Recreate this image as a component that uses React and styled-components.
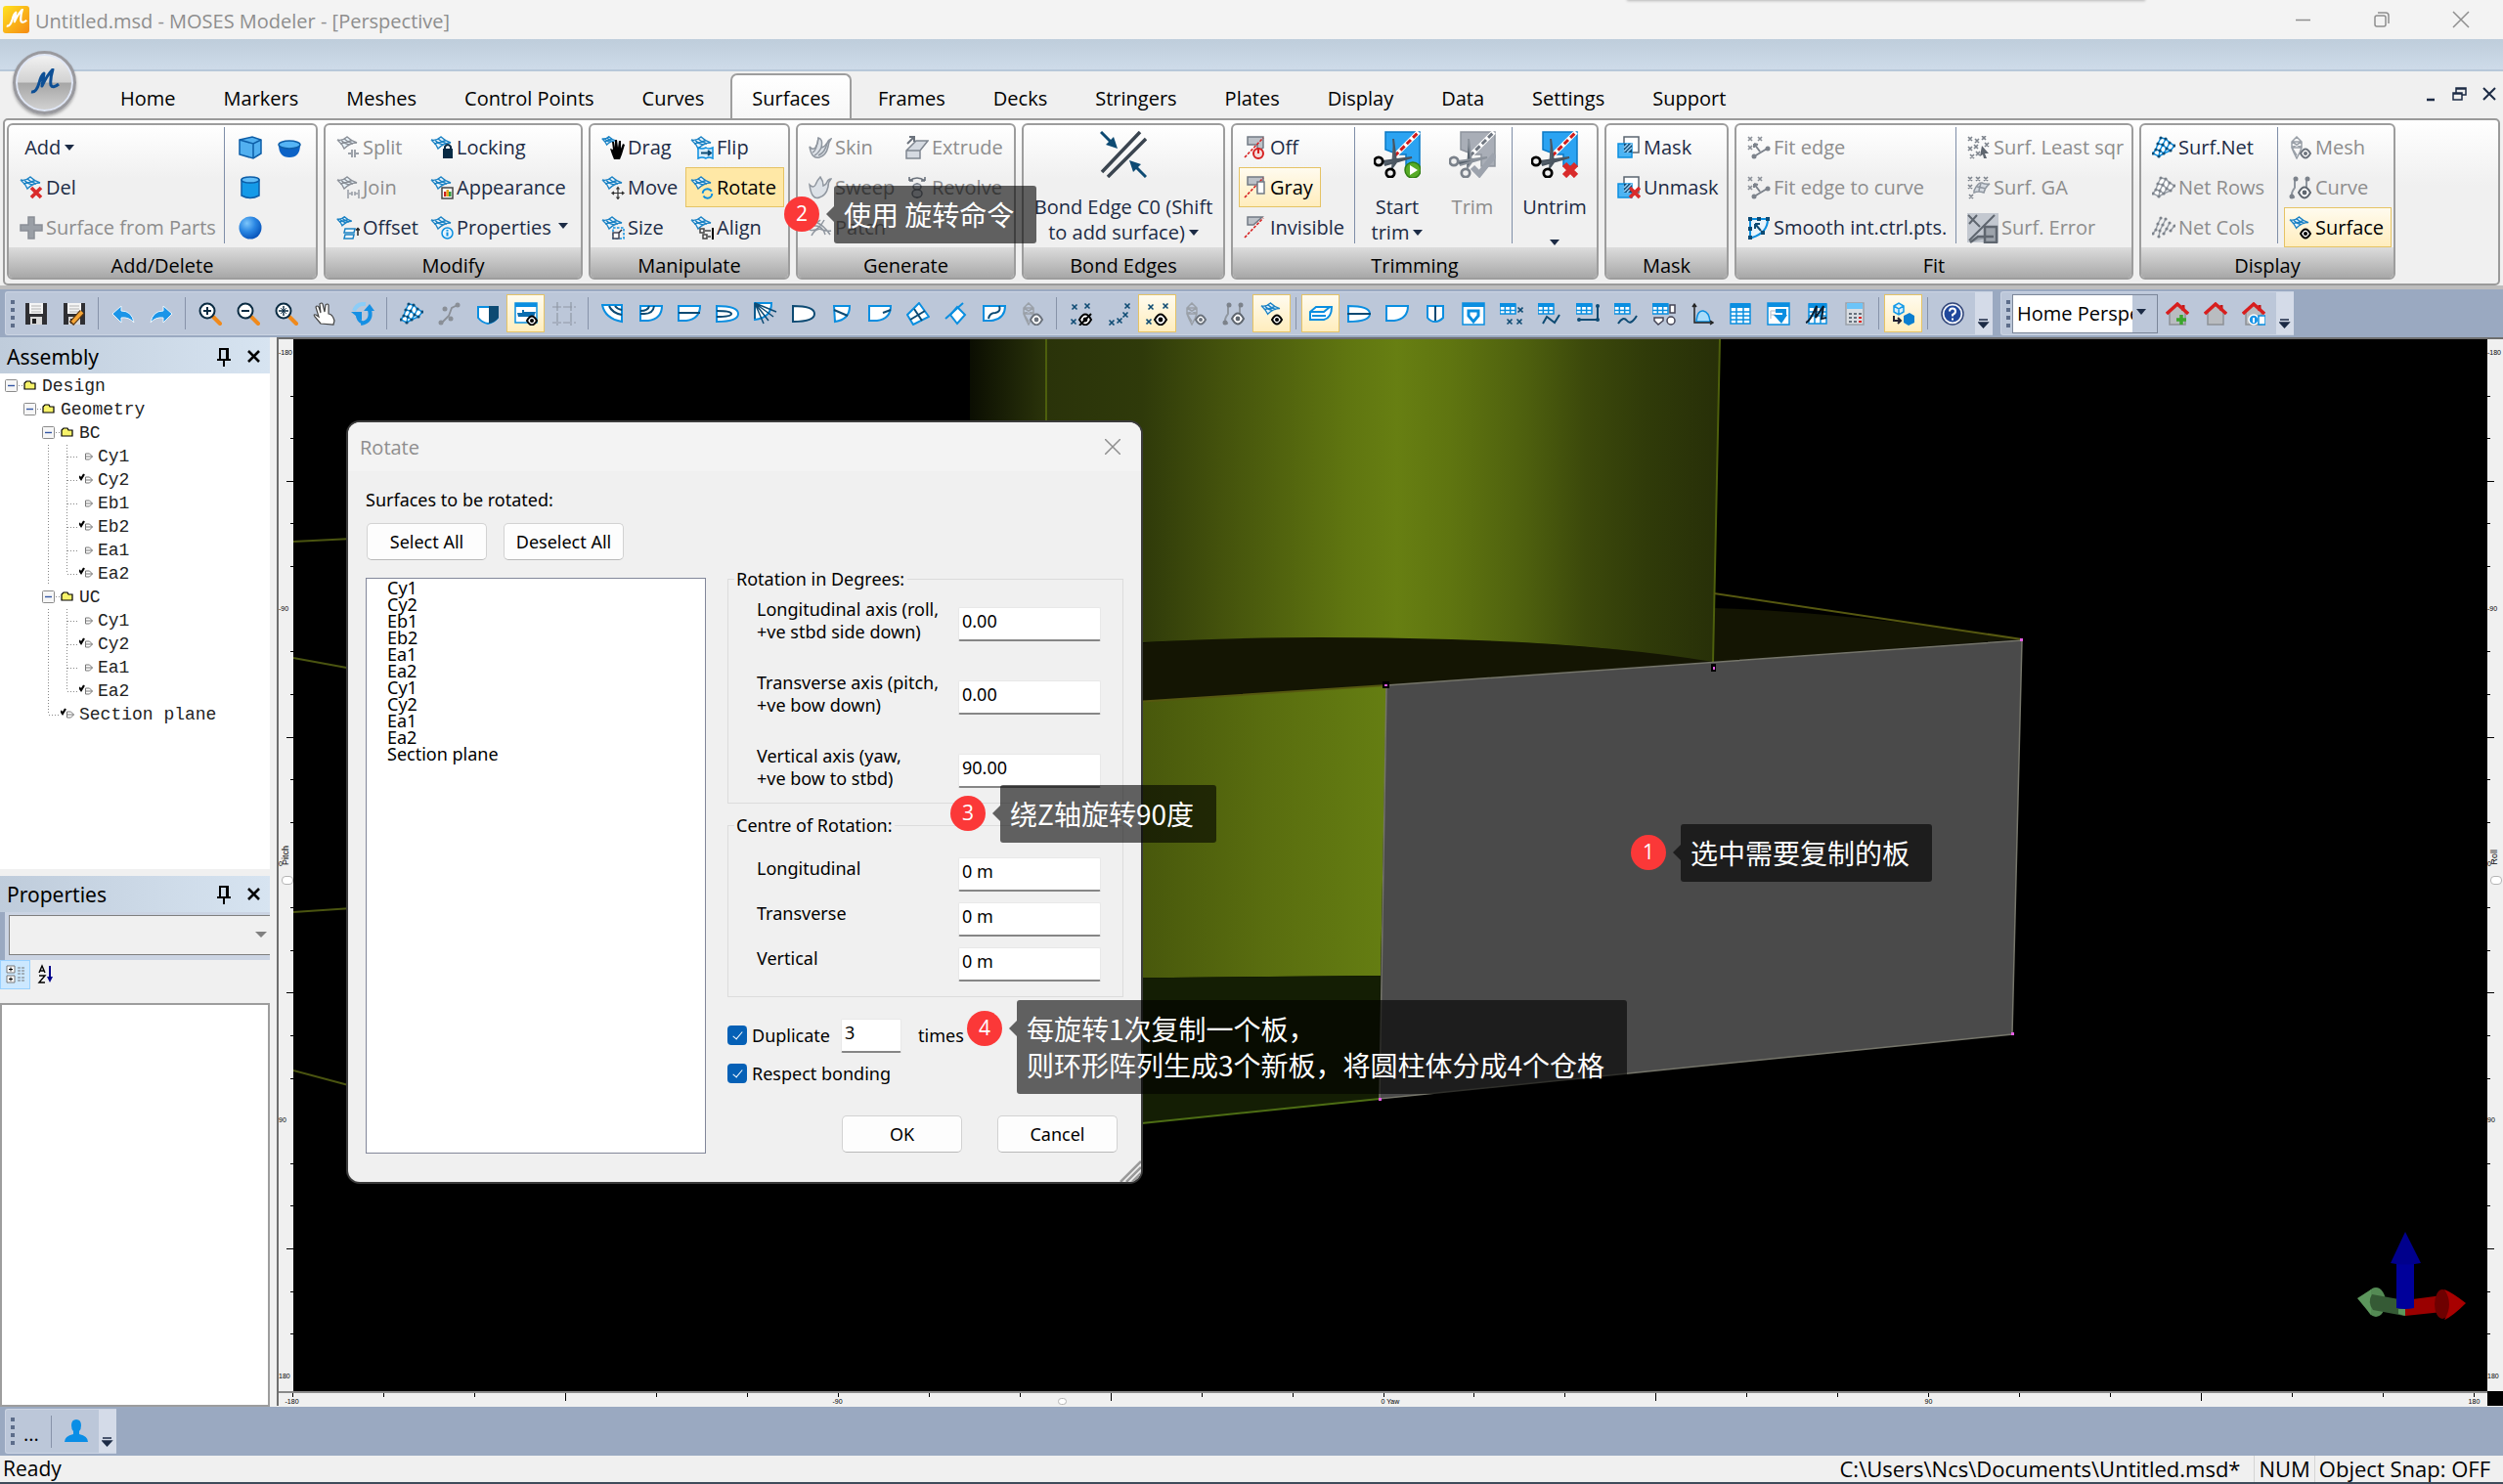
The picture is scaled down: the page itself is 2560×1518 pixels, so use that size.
import React from "react";
import styled, { createGlobalStyle, css } from "styled-components";

const Global = createGlobalStyle`
  *, *::before, *::after { box-sizing: border-box; }
  body { margin: 0; background: #f0f0f0; font-family: "Open Sans", "Noto Sans CJK SC", sans-serif; font-size: 20px; color: #000; }
  button, input, select { font: inherit; color: inherit; margin: 0; }
  button { cursor: default; }
`;

const BLUE = "#0a8ee0";
const NAVY = "#0d4a73";
const GRAY = "#8a8f97";

/* ---------- icons ---------- */

const Svg = ({ s = 24, box = 24, children }) => (
  <svg width={s} height={s} viewBox={`0 0 ${box} ${box}`} fill="none" strokeWidth="1.5" aria-hidden="true">
    {children}
  </svg>
);

const Patch = ({ c = "#1b82c4", k = 1 }) => (
  <g stroke={c} strokeWidth={1.4 / k} transform={`scale(${k})`}>
    <path d="M1 4Q6 5.500 11 1Q15 5 21 7Q14 7 8 13Q6 8 1 4Z" fill="#eaf4fb" />
    <path d="M5 4.500Q8 8 13 9M4 8Q10 7 16 4.500M8 3Q11 6 17 8" />
  </g>
);

const Cross = ({ x = 12, y = 12, c = "#d92b2b" }) => (
  <path d={`M${x} ${y}l10 10M${x + 10} ${y}l-10 10`} stroke={c} strokeWidth="3.600" />
);

const Eye = ({ x = 12, y = 17, c = "#000", r = 6 }) => (
  <g>
    <path d={`M${x - r} ${y}q${r} ${-r * 1.8} ${r * 2} 0q${-r} ${r * 1.8} ${-r * 2} 0z`} fill="#fff" stroke={c} strokeWidth="2" />
    <circle cx={x} cy={y} r={r * 0.4} fill={c} />
  </g>
);

const Xs = ({ pts, c = NAVY, r = 2.5 }) => (
  <path d={pts.map(([x, y]) => `M${x - r} ${y - r}l${2 * r} ${2 * r}m0 ${-2 * r}l${-2 * r} ${2 * r}`).join("")} stroke={c} strokeWidth="1.600" />
);

const NET_DOTS = [[9, 2], [14, 3], [18, 7], [23, 10], [6, 8], [11, 9], [15, 13], [19, 15], [4, 14], [8, 15], [12, 18], [1, 18], [7, 21]];

const Net = ({ c = BLUE, d = NAVY }) => (
  <g>
    <path d="M9 2L14 3L18 7L23 10L19 15L12 18L7 21L1 18L4 14L6 8Z" fill="#fff" stroke={c} />
    <path d="M6 8L11 9L15 13L19 15M4 14L8 15L12 18M14 3L11 9L8 15L7 21M18 7L15 13L12 18" stroke={c} />
    {NET_DOTS.map(([x, y]) => <circle key={`${x}-${y}`} cx={x} cy={y} r="1.600" fill={d} />)}
  </g>
);

const Rungs = () => (
  <g>
    <path d="M9 2L6 8L4 14L1 18M14 3L11 9L8 15L7 21M18 7L15 13L12 18M23 10L19 15" stroke="#9aa0a8" />
    {NET_DOTS.map(([x, y]) => <circle key={`${x}-${y}`} cx={x} cy={y} r="1.600" fill="#7c828b" />)}
  </g>
);

const Grid = ({ w = 16 }) => (
  <g>
    <path d={`M0 2h${w}v10H0z`} fill="#fff" stroke={BLUE} />
    <path d={`M0 1h${w}v4H0z`} fill={BLUE} />
    <path d={`M0 8.500h${w}M${w / 3} 4v8M${(w * 2) / 3} 4v8`} stroke={BLUE} />
  </g>
);

const Lens = ({ children }) => (
  <g>
    <path d="M15 15l7 7" stroke="#f08a1c" strokeWidth="4" strokeLinecap="round" />
    <circle cx="9" cy="9" r="7.500" fill="#fff" stroke="#0a2b42" strokeWidth="2" />
    <g stroke="#0a2b42" strokeWidth="2">{children}</g>
  </g>
);

const Disk = () => (
  <g>
    <path d="M1 1h22v22H1z" fill="#2f2f33" />
    <path d="M5 1h14v11H5z" fill="#f4f4f4" />
    <path d="M7 4h10M7 7h10M7 10h10" stroke="#c9c9c9" />
    <path d="M6 15h12v8H6z" fill="#d8d8d8" />
    <path d="M8 17h4v5H8z" fill="#1d1d1f" />
  </g>
);

const House = ({ children }) => (
  <g>
    <path d="M4 10l8-7 8 7v13H4z" fill="#b9bcc0" stroke="#8d9196" />
    <path d="M18 3v6" stroke="#c01818" strokeWidth="3" />
    <path d="M1 12L12 2l11 10" stroke="#d81e1e" strokeWidth="3.400" />
    {children}
  </g>
);

const Bud = ({ c = "#9aa0a8" }) => (
  <path d="M8 1l5 5v6l-2 5-3 6-3-6-2-5V6zM3 6h10M3 12h10M3 6l10 6M13 6L3 12l5 8" stroke={c} strokeWidth="1.500" />
);

const Hull = ({ children }) => (
  <g>
    <path d="M1 4h22q0 13-14 15H1z" fill="#fff" stroke={BLUE} strokeWidth="2" />
    <g stroke={NAVY}>{children}</g>
  </g>
);

const FitDots = () => (
  <g>
    <Xs pts={[[3, 3], [13, 3], [3, 12]]} c="#8a8f97" r={2} />
    <path d="M7 21L22 12M7 8l6 8M7 8l4 1M7 8v4" stroke="#7c828b" strokeWidth="2" />
    <circle cx="7" cy="21" r="2.500" fill="#7c828b" />
    <circle cx="21" cy="13" r="2.500" fill="#7c828b" />
  </g>
);

const MaskBase = () => (
  <g>
    <path d="M7 1h15v16H7z" fill="#fff" stroke="#5b6570" />
    <path d="M1 8h14v14H1z" fill="#4db4f3" stroke={BLUE} />
    <path d="M7 8h8v9H7z" fill="#0d4a73" />
    <path d="M7 12l4-4M7 16l8-8M10 17l5-5" stroke="#9fd4f7" />
  </g>
);

const TrimBase = () => (
  <g>
    <path d="M4 1h16v11l-6 4V9H4z" fill="#bcc1c8" stroke="#727a84" />
    <path d="M1 22L20 2" stroke="#d62020" strokeWidth="1.600" strokeDasharray="3 1.500" />
  </g>
);

const Scissors = ({ off, children }) => {
  const dark = off ? "#7a818a" : "#000";
  return (
    <g>
      <path d="M12 1h35v35H33V24h-8l-13-5z" fill={off ? "#a9aeb7" : "#2ba3f2"} stroke={off ? "#8e949d" : "#0b78c4"} />
      <path d="M21 26L46 1" stroke="#fff" strokeWidth="5" />
      <path d="M21 26L46 1" stroke={off ? "#6f7680" : "#cf1b1b"} strokeWidth="3" strokeDasharray="6 3" />
      <path d="M20 8l3 24-5 7M9 31l30-4-28 8" fill="#56616c" stroke={off ? "#8b929b" : "#4a5560"} strokeWidth="2" />
      <circle cx="5" cy="31" r="4.200" stroke={dark} strokeWidth="2.800" fill="#f0f0f0" />
      <circle cx="17" cy="43" r="4.200" stroke={dark} strokeWidth="2.800" fill="#f0f0f0" />
      {children}
    </g>
  );
};

const ICONS = {
  del: <g><Patch /><Cross /></g>,
  plus: <path d="M9 1h6v8h8v6h-8v8H9v-8H1V9h8z" fill="#9a9fa6" stroke="#8a8f96" />,
  box: <g><path d="M1 4l13-3 9 3v14l-8 5-14-4z" fill="#52b0f0" stroke="#0d5ea8" /><path d="M1 4l14 4 8-4M15 8v15" stroke="#0d5ea8" /></g>,
  bowl: <g><path d="M1 9q0 13 11 13T23 9z" fill="#0c62c6" /><ellipse cx="12" cy="9" rx="11" ry="4" fill="#55b4f5" stroke="#0d5ea8" /></g>,
  cyl: <g><path d="M3 4v16q9 5 18 0V4z" fill="#149ae8" stroke="#0d5ea8" /><ellipse cx="12" cy="4" rx="9" ry="3" fill="#62bdf7" stroke="#0d5ea8" /></g>,
  ball: <g><defs><radialGradient id="ballShade" cx="0.350" cy="0.300" r="0.750"><stop offset="0" stopColor="#7cc6fb" /><stop offset="0.500" stopColor="#2a86e2" /><stop offset="1" stopColor="#0550b8" /></radialGradient></defs><circle cx="12" cy="12" r="11.500" fill="url(#ballShade)" /></g>,
  split: <g><Patch c={GRAY} /><path d="M12 18h3M23 18h-3M16 14v8M19 14v8" stroke="#9ca1a9" strokeWidth="2" /></g>,
  join: <g><Patch c={GRAY} /><path d="M12 14v9M23 14v9M13 18h3M22 18h-3M16 16v4M19 16v4" stroke="#9ca1a9" strokeWidth="1.600" /></g>,
  offset: <g><Patch k={0.75} /><path d="M9 13h10l-1 4H8zM9 19h9l-1 4H8z" fill="#fff" stroke="#1b82c4" /><path d="M22 20v-7M20 14.500l2-2 2 2" stroke="#222" /></g>,
  lock: <g><Patch /><path d="M13 13h10v10H13z" fill="#082a44" /><path d="M15 14v-3q3-4 6 0v3" stroke="#082a44" strokeWidth="2" /></g>,
  appear: <g><Patch /><path d="M12 12h11v11H12z" fill="#fff" stroke="#444" /><path d="M14 16h2.500v5H14z" fill="#c22" /><path d="M16.500 14h2.500v7h-2.500z" fill="#e8a51c" /><path d="M19 16h2.500v5H19z" fill="#2a9a3a" /></g>,
  props: <g><Patch /><circle cx="17.500" cy="17.500" r="5.500" fill="#e6f4fd" stroke={BLUE} /><path d="M17.500 16.500v4M17.500 14v1.500" stroke={BLUE} strokeWidth="2" /></g>,
  drag: <g><Patch k={0.7} /><path d="M9 13l3 1-1-8 2 0 1 6 0-8 2 0 1 8 1-7 2 0 0 8 2-5 2 1-3 10-2 5h-6l-2-5z" fill="#000" /></g>,
  move: <g><Patch /><path d="M17 12v11M11.500 17.500h11M15.500 13.500l1.500-2 1.500 2M15.500 21.500l1.500 2 1.500-2M13 16l-2 1.500 2 1.500M21 16l2 1.500-2 1.500" stroke="#333" strokeWidth="1.200" /></g>,
  size: <g><Patch /><path d="M12 12h11v11H12z" stroke={BLUE} strokeDasharray="2.500 1.500" /><path d="M12 17h6v6h-6z" fill="#fff" stroke="#445" /><path d="M18 17l3-3" stroke="#223" /></g>,
  flip: <g><Patch /><path d="M8 12q4 2 8 0 3 2 7 0v11q-4-2-7 0-4-2-8 0z" fill="#d6edfc" stroke={BLUE} /><path d="M11 17.500h9M18 15l3 2.500-3 2.500" stroke={NAVY} strokeWidth="2" /></g>,
  rotate: <g><Patch /><circle cx="17.500" cy="18" r="4.800" stroke={BLUE} strokeWidth="2" strokeDasharray="12 3" /></g>,
  align: <g><Patch /><path d="M10 13h4v4h-4zM13 19h4v4h-4zM15 15h6M18 21h3" fill="#fff" stroke="#444" /><path d="M23 12v12" stroke="#000" strokeWidth="2" /></g>,
  skin: <g><path d="M1 11q3 4 6 1 3-5 3-10 5 1 3 10 4-1 6-5 1-3 4-4-3 4-3 8-2 9-9 11-8 2-10-11z" fill="#dce1e7" stroke="#8f969f" /><path d="M10 2q-2 14-6 15M13 12q-3 6-7 8M19 7q-2 10-9 13" stroke="#8f969f" /></g>,
  sweep: <path d="M1 9q4 4 6 0 2-5 5-8 3 4 3 9 3-1 4-4 1-3 4-3-3 3-3 8-2 9-9 11-8 3-10-13z" fill="#dce1e7" stroke="#8f969f" />,
  patch: <path d="M2 8q5 1 10-4M3 20q5-9 11-6 6 2 9 1M6 10q8-1 11 9M9 7q6 2 13 12M1 14q8 3 15-10" stroke="#8f969f" />,
  extrude: <g><path d="M1 15l10-10h12l-8 10v8H1zM1 15h14" fill="#d5dae1" stroke="#7f8690" /><path d="M2 8l6-6M4 1h5v5" stroke="#6b727c" strokeWidth="2" /></g>,
  revolve: <g><path d="M4 5q8-6 16 0M4 5V1M4 5h4M20 5V1M20 5h-4" stroke="#6b727c" strokeWidth="1.600" /><path d="M12 7v17" stroke="#6b727c" strokeDasharray="2 1.500" /><ellipse cx="12" cy="11" rx="4" ry="3" stroke="#7f8690" fill="#d5dae1" /><ellipse cx="12" cy="18" rx="5" ry="4" stroke="#7f8690" fill="#d5dae1" /></g>,
  off: <g><TrimBase /><circle cx="15" cy="18" r="5" stroke="#d62020" strokeWidth="2" fill="#f4dada" /><path d="M15 12v6" stroke="#d62020" strokeWidth="2" /></g>,
  gray: <g><TrimBase /><path d="M14 6h7v12h-7z" fill="#fff" stroke="#727a84" /></g>,
  invis: <g><path d="M4 1h15l-9 8H4z" fill="#bcc1c8" stroke="#727a84" /><path d="M1 22L20 2" stroke="#d62020" strokeWidth="1.600" strokeDasharray="3 1.500" /></g>,
  mask: <MaskBase />,
  unmask: <g><MaskBase /><Cross x={13} y={12} /></g>,
  fit: <FitDots />,
  smooth: <g><path d="M3 3h18q0 14-16 19H3z" fill="#e8f4fc" stroke={BLUE} strokeWidth="2" /><path d="M14 15L8 8M8 8v5M8 8h5" stroke={NAVY} strokeWidth="2" /><path d="M1 1h4v4H1zM10 1h4v4h-4zM19 1h4v4h-4zM1 20h4v4H1zM1 11h4v4H1zM14 15h4v4h-4z" fill={NAVY} /></g>,
  least: <g><Xs pts={[[3, 3], [10, 5], [17, 2], [3, 13], [9, 11], [20, 9], [5, 21], [11, 18]]} c="#7c828b" r={2} /><path d="M15 10l7 8h-4l2 5-3 0-1-4-3 2z" fill="#5f666f" /></g>,
  ga: <g><Xs pts={[[3, 3], [11, 3], [19, 3], [3, 11], [4, 21]]} c="#7c828b" r={2} /><path d="M7 15q4-9 8-8 4 2 8 1-5 4-6 9-6-2-10 0zM10 11q6 1 9 2M14 8q-2 4-2 8" stroke="#8f969f" fill="#d5dae1" /></g>,
  mesh: <g><Bud /><Eye x={17} y={18} c="#6b727c" r={5} /></g>,
  curve: <g><path d="M6 3v9q-6 8 0 10M18 3v10" stroke="#8f969f" strokeWidth="2" /><circle cx="7" cy="3" r="2.500" fill="#7c828b" /><circle cx="19" cy="3" r="2.500" fill="#7c828b" /><circle cx="3" cy="21" r="2.500" fill="#7c828b" /><Eye x={16} y={17} c="#5f666f" r={6} /></g>,
  surfEye: <g><Patch k={0.95} /><Eye x={17} y={18} r={5} /></g>,
  net: <Net />,
  netG: <Net c="#9aa0a8" d="#7c828b" />,
  netCols: <Rungs />,
  save: <Disk />,
  saveEdit: <g><Disk /><path d="M9 22l11-12" stroke="#5a3510" strokeWidth="6" /><path d="M10 21l10-11" stroke="#f5a637" strokeWidth="3.600" /></g>,
  undo: <path d="M1 12l9-8v5q11 0 13 12-5-6-13-5v5z" fill="#1b95e8" stroke="#e8f4fc" strokeWidth="1" />,
  redo: <path d="M23 12l-9-8v5q-11 0-13 12 5-6 13-5v5z" fill="#1b95e8" stroke="#e8f4fc" strokeWidth="1" />,
  zin: <Lens><path d="M5 9h8M9 5v8" /></Lens>,
  zout: <Lens><path d="M5 9h8" /></Lens>,
  zfit: <Lens><path d="M4 9h10M9 4v10" strokeWidth="1.400" /><path d="M6 6l6 6M12 6l-6 6" strokeWidth="0.800" /></Lens>,
  hand: <path d="M8 22l-6-7q-2-3 1-2l3 2L3 5q1-2 3 0l2 6-1-9q2-2 3 0l2 8 1-7q2-2 3 0l0 9q4 0 6 7l-1 4z" fill="#fff" stroke="#444" strokeWidth="1.200" />,
  spin: <g><path d="M3 9Q6 1 15 2" stroke="#8ccdf7" strokeWidth="4" /><path d="M19 8q3 12-9 14" stroke="#1690e4" strokeWidth="4" /><path d="M0 10l11 0v9z" fill="#1690e4" /><path d="M6 12q1 8 6 9" stroke="#1690e4" strokeWidth="3" /><path d="M13 9l6-7 5 7z" fill="#1690e4" /></g>,
  curveNet: <g><path d="M20 3l-6 3-3 8-8 8" stroke={GRAY} strokeWidth="1.800" /><circle cx="20" cy="3" r="2.500" fill={GRAY} /><circle cx="7" cy="7" r="2.500" fill={GRAY} /><circle cx="13" cy="17" r="2.500" fill={GRAY} /><circle cx="3" cy="21" r="2.500" fill={GRAY} /></g>,
  shade: <g><path d="M2 5h20v11q-4 5-10 6-6-1-10-6z" fill="#fff" stroke={BLUE} strokeWidth="2" /><path d="M13 4h10v12q-4 5-10 6z" fill={NAVY} /></g>,
  ship: <g><path d="M1 1h22v20H1z" fill="#fff" stroke={BLUE} strokeWidth="1.500" /><path d="M1 1h22v4H1z" fill={BLUE} /><path d="M3 11h5V8h2v2h12l-2 5H4z" fill="#0a6db0" /><Eye x={18} y={19} r={5} /></g>,
  crop: <path d="M5 0v24M19 0v24M0 5h24M0 21h24" stroke="#9098a5" strokeWidth="1.200" strokeDasharray="9 2" />,
  h1: <g><path d="M1 3h20v17Q4 17 1 3z" fill="#fff" stroke={BLUE} strokeWidth="2" /><path d="M8 4q3 7 13 9M14 4q2 3 7 4" stroke={NAVY} strokeWidth="2" /></g>,
  h2: <Hull><path d="M1 12h4q9 0 10-8M1 9q8 0 9-5" strokeWidth="2" /></Hull>,
  h3: <Hull><path d="M1 11h22" strokeWidth="2" /></Hull>,
  h4: <g><path d="M1 4q22 0 22 8T1 20z" fill="#fff" stroke={BLUE} strokeWidth="2" /><path d="M1 9q15 0 15 3T1 15" stroke={NAVY} strokeWidth="2" /></g>,
  h5: <g><path d="M1 1h17q0 15-17 17z" fill="#fff" stroke={BLUE} strokeWidth="2" /><path d="M1 1l9 21M1 1l14 18M1 1l22 9M1 1l19 14M1 1v16" stroke={NAVY} /></g>,
  h6: <path d="M1 4q22 0 22 8T1 20z" fill="#fff" stroke={NAVY} strokeWidth="2" />,
  h7: <g><path d="M4 4h16q0 14-15 16z" fill="#fff" stroke={BLUE} strokeWidth="2" /><path d="M4 8l14 6" stroke={NAVY} strokeWidth="2" /></g>,
  h8: <Hull><path d="M15 11l8-3" strokeWidth="2" /></Hull>,
  h9: <g><path d="M13 1l10 14-16 8L1 13z" fill="#fff" stroke={BLUE} strokeWidth="2" /><path d="M8 7l8 12M4 18l15-9" stroke={NAVY} strokeWidth="2" /></g>,
  h10: <g><path d="M13 5l8 8-8 9-7-9z" fill="#fff" stroke={BLUE} strokeWidth="2" /><path d="M1 17L19 1" stroke={BLUE} strokeWidth="2" /></g>,
  h11: <Hull><path d="M17 4q2 6-4 7-6 0-7 6" strokeWidth="2" /></Hull>,
  budEye: <g><Bud /><Eye x={16} y={18} c="#6b727c" r={6} /></g>,
  xNo: <g><Xs pts={[[5, 5], [18, 4], [4, 20]]} /><Eye x={16} y={18} r={6} /><path d="M10 24L22 12" stroke="#000" strokeWidth="2" /></g>,
  xx: <Xs pts={[[20, 4], [18, 13], [12, 19], [4, 21]]} />,
  xEye: <g><Xs pts={[[5, 5], [20, 4], [3, 20]]} /><Eye x={15} y={18} r={6} /></g>,
  b1: <g><path d="M1 10l6-5h16q0 11-8 13H1zM1 10h14l6-5M3 14h14" fill="#fff" stroke={BLUE} strokeWidth="2" /></g>,
  b2: <g><path d="M1 4q22 0 22 8T1 20z" fill="#fff" stroke={BLUE} strokeWidth="2" /><path d="M0 12h24" stroke={NAVY} strokeWidth="2" /></g>,
  b3: <Hull />,
  b4: <g><path d="M4 4h16v12q-4 4-8 4-5 0-8-4z" fill="#fff" stroke={BLUE} strokeWidth="2" /><path d="M12 4v15" stroke={NAVY} strokeWidth="2" /></g>,
  b5: <g><path d="M1 1h22v22H1z" fill="#fff" stroke={BLUE} /><path d="M1 1h22v4H1z" fill={BLUE} /><path d="M7 9h10v5l-5 6-5-6z" fill="#fff" stroke={BLUE} strokeWidth="3" /></g>,
  t1: <g><Grid /><Xs pts={[[21, 8], [10, 20], [20, 20]]} /></g>,
  t2: <g><Grid /><path d="M5 22l4-7 8 6 5-8" stroke={NAVY} strokeWidth="2" /></g>,
  t3: <g><Grid /><path d="M22 4v14H3" stroke={NAVY} strokeWidth="2" /><circle cx="22" cy="4" r="2" fill={NAVY} /><circle cx="3" cy="18" r="2" fill={NAVY} /><circle cx="22" cy="18" r="2" fill={NAVY} /></g>,
  t4: <g><Grid /><path d="M4 22q5-8 9-3t10-5" stroke={NAVY} strokeWidth="2" /></g>,
  t5: <g><Grid /><path d="M18 3h5v8h-5zM2 16h9v3l-5 4-4-4z" stroke="#445" fill="#fff" /><circle cx="19" cy="19" r="4" stroke="#445" fill="#fff" /></g>,
  t6: <g><path d="M6 20q1-12 7-11 6 1 7 11z" fill="#a8dcfb" stroke={BLUE} /><path d="M4 2v19h19M2 5l2-3 2 3M20 19l3 2-3 2" stroke="#222" /></g>,
  t7: <g><path d="M2 2h20v20H2z" fill="#fff" stroke={BLUE} /><path d="M2 1h20v5H2z" fill={BLUE} /><path d="M2 10h20M2 14h20M2 18h20M8 6v16M15 6v16" stroke={BLUE} /></g>,
  t8: <g><path d="M1 1h22v22H1z" fill="#fff" stroke={BLUE} /><path d="M1 1h22v4H1z" fill={BLUE} /><path d="M4 9h9M4 13h5M4 9v8" stroke="#c9ced6" /><path d="M9 9h9v6" stroke={BLUE} strokeWidth="4" /><path d="M7 13h14l-6 9z" fill={BLUE} /></g>,
  t9: <g><path d="M4 2h18v20H4z" fill="#fff" stroke={BLUE} /><path d="M4 1h18v5H4z" fill={BLUE} /><path d="M4 10h18M4 14h18M10 6v16M16 6v16" stroke={BLUE} /><path d="M1 21q4-1 11-17l-1 12L19 4l-2 13 5-1" stroke="#0a2034" strokeWidth="2" /></g>,
  calc: <g><path d="M3 1h18v22H3z" fill="#d9dde2" stroke="#9ba1a9" /><path d="M4 1h16v6H4z" fill="#6cc4f8" /><path d="M6 12h3M11 12h3M16 12h3M6 16h3M11 16h3M6 20h3M11 20h3" stroke="#66707b" strokeWidth="2" /><path d="M16 16h3M16 20h3" stroke="#d22" strokeWidth="2" /></g>,
  cubes: <g><path d="M2 4l5-3 5 3v6l-5 3-5-3zM2 4l5 3 5-3M7 7v6" fill="#d9effc" stroke="#149ae8" /><path d="M2 14v5h6M6 16l3 3-3 3" stroke="#223" strokeWidth="2" /><path d="M12 14l6-3 5 3v7l-6 3-5-3z" fill="#0a7ed0" /></g>,
  help: <g><circle cx="12" cy="12" r="11" fill="#f4f6fb" stroke="#33477a" /><circle cx="12" cy="12" r="8.500" fill="#20489c" /><path d="M9 9.500q0-3 3-3t3 3q0 2-3 3.500v1.500M12 16.500v2" stroke="#fff" strokeWidth="2" /></g>,
  homeAdd: <House><path d="M16 13v10M11 18h10" stroke="#3ba52c" strokeWidth="3.500" /></House>,
  home: <House />,
  homeInfo: <House><circle cx="12" cy="18" r="5" fill="#1b95e8" stroke="#fff" /><path d="M12 16v5" stroke="#fff" strokeWidth="2" /><path d="M17 14h7v9h-7z" fill="#fff" stroke={BLUE} /></House>,
  user: <path d="M12 0q5 0 5 6 0 4-2 6v3q9 2 9 8H0q0-6 9-8v-3q-2-2-2-6 0-6 5-6z" fill="#0a8ee6" />,
  pin: <path d="M7 4h8v11H7zM14 4v11M4 15h14M11 15v7" stroke="#000" strokeWidth="2" />,
  close: <path d="M6 6l11 11M17 6L6 17" stroke="#000" strokeWidth="2.600" />,
};

const BIG = {
  bond: <g stroke="#3b4550"><path d="M2 42L41 1M8 47L47 8" strokeWidth="3.500" /><path d="M1 1l13 13M47 47L34 34" stroke="#0d4a73" strokeWidth="3" /><path d="M18 18L6 14l8-8zM30 30l4 12 8-8z" fill="#0d4a73" stroke="none" /></g>,
  start: <Scissors><circle cx="40" cy="40" r="8" fill="#57ab27" stroke="#2f7d12" /><path d="M37 35l8 5-8 5z" fill="#fff" /></Scissors>,
  trim: <Scissors off><path d="M24 37l7 7L47 24" stroke="#9da3ad" strokeWidth="6" /></Scissors>,
  untrim: <Scissors><path d="M34 34l12 12M46 34L34 46" stroke="#d92b2b" strokeWidth="6" /></Scissors>,
};

const Icon = ({ name, size = 24 }) => <Svg s={size}>{ICONS[name]}</Svg>;

const LogoMark = ({ s, c }) => (
  <Svg s={s} box={30}>
    <path d="M1 24q5 1 8-9 2-8 5-10l-2 13Q17 7 23 1q-3 10-2 16 2 4 8-1" stroke={c} strokeWidth="3" strokeLinejoin="round" />
  </Svg>
);

/* ---------- frame ---------- */

const Page = styled.div`
  position: relative;
  display: flex;
  flex-direction: column;
  min-height: 100vh;
  border-bottom: 2px solid #3f4b5a;
`;

const TitleBar = styled.header`
  display: flex;
  align-items: center;
  height: 40px;
  padding: 0 34px 0 3px;
  gap: 6px;
  background: #f3f3f3;
  color: #8e8e8e;
`;

const TitleIcon = styled.span`
  display: grid;
  place-items: center;
  width: 27px;
  height: 28px;
  border-radius: 3px;
  background: linear-gradient(135deg, #ffe21f, #f58a14);
`;

const TitleText = styled.h1`
  margin: 0;
  padding-top: 2px;
  flex: 1;
  font-size: 20px;
  font-weight: 400;
`;

const WindowButtons = styled.div`
  display: flex;
  gap: 63px;
`;

const PlainButton = styled.button`
  display: grid;
  place-items: center;
  padding: 0;
  border: 0;
  background: none;
`;

const PopupEdge = styled.div`
  position: absolute;
  top: -6px;
  left: 65%;
  width: 530px;
  height: 6px;
  box-shadow: 0 1px 3px rgba(0, 0, 0, 0.25);
`;

const Band = styled.div`
  height: 33px;
  background: linear-gradient(#becddb, #cedbe9);
  border-bottom: 2px solid #b7c8d9;
`;

const AppButton = styled.button`
  position: absolute;
  left: 13px;
  top: 52px;
  z-index: 2;
  display: grid;
  place-items: center;
  width: 65px;
  height: 65px;
  padding: 0;
  border: 3px solid #9a9a9f;
  border-radius: 50%;
  background: linear-gradient(#f4f4f4, #d2d2d2 49%, #a6a6a6 51%, #d4d4d4);
  box-shadow: inset 0 0 0 2px #dfe6f5, 0 2px 3px rgba(0, 0, 0, 0.3);
`;

const TabRow = styled.nav`
  display: flex;
  align-items: flex-end;
  justify-content: space-between;
  height: 48px;
  padding: 0 6px 0 101px;
  background: #f0f0f0;
`;

const Tabs = styled.div`
  display: flex;
  gap: 5px;
`;

const Tab = styled.button`
  height: 46px;
  padding: 2px 20px 0;
  border: 2px solid ${(p) => (p.$on ? "#9e9e9e" : "transparent")};
  border-bottom: 0;
  border-radius: 7px 7px 0 0;
  background: ${(p) => (p.$on ? "linear-gradient(#fff, #f7f7f7)" : "none")};
`;

const MdiButtons = styled.div`
  display: flex;
  gap: 14px;
  padding-bottom: 16px;
`;

const Ribbon = styled.section`
  display: flex;
  gap: 6px;
  height: 171px;
  margin: 0 3px;
  padding: 3px 2px;
  border: 2px solid #9a9a9a;
  border-radius: 5px;
  background: linear-gradient(#fff, #f0f0f0 40%);
`;

const Gutter = styled.div`
  height: 4px;
  background: #bdbdbd;
`;

const GroupBox = styled.section`
  display: flex;
  flex-direction: column;
  flex: none;
  width: ${(p) => p.$w}px;
  height: 160px;
  border: 2px solid #9d9d9d;
  border-radius: 6px;
  background: linear-gradient(#fff, #f0f0f0 35%);
  overflow: hidden;
`;

const GroupBody = styled.div`
  display: flex;
  flex: 1;
  padding: 2px 6px 0;
`;

const GroupTitle = styled.h2`
  margin: 0;
  height: 31px;
  font-size: 20px;
  font-weight: 400;
  line-height: 37px;
  text-align: center;
  background: linear-gradient(#dcdcdc, #a8a8a8);
`;

const Column = styled.div`
  display: flex;
  flex-direction: column;
  align-items: flex-start;
  flex: none;
  width: ${(p) => (p.$w ? `${p.$w}px` : "auto")};
  padding-left: ${(p) => p.$inset || 0}px;
`;

const Rule = styled.span`
  flex: none;
  width: 1px;
  margin: 0 6px 4px 0;
  background: #7f8ea8;
`;

const hot = css`
  border-color: #e5c365;
  background: ${(p) => (p.$on === "strong" ? "#ffe8a6" : "linear-gradient(#fffbef, #ffedbd)")};
`;

const Command = styled.button`
  display: flex;
  align-items: center;
  gap: 3px;
  height: 41px;
  padding: 0 7px 0 4px;
  border: 1px solid transparent;
  background: none;
  color: ${(p) => (p.disabled ? "#8d8d8d" : p.$on ? "#000" : "#1c2b45")};
  white-space: nowrap;
  ${(p) => p.$on && hot}
`;

const BigCommand = styled.button`
  display: flex;
  flex-direction: column;
  align-items: center;
  width: ${(p) => p.$w}px;
  padding: 4px 0 0;
  border: 0;
  background: none;
  color: ${(p) => (p.disabled ? "#8d8d8d" : "#1c2b45")};
  line-height: 26px;
  white-space: nowrap;
`;

const BigLabel = styled.span`
  display: block;
  margin-top: 17px;
`;

const Caret = styled.span`
  display: inline-block;
  margin: 0 0 4px 4px;
  border: 5px solid transparent;
  border-top: 6px solid ${(p) => p.$c || "#1c2b45"};
  border-bottom: 0;
`;

const LowCaret = styled(Caret)`
  margin: 8px 0 0;
  vertical-align: bottom;
`;

const Cmd = ({ icon, label, on, off, menu, size }) => (
  <Command type="button" $on={on} disabled={off} aria-label={label || icon}>
    {icon && <Icon name={icon} size={size} />}
    {label}
    {menu && <Caret />}
  </Command>
);

const Group = ({ title, w, children }) => (
  <GroupBox $w={w}>
    <GroupBody>{children}</GroupBody>
    <GroupTitle>{title}</GroupTitle>
  </GroupBox>
);

/* ---------- tool bars ---------- */

const Strip = styled.div`
  display: flex;
  gap: 8px;
  flex: none;
  height: ${(p) => p.$h}px;
  padding: 2px 5px;
  background: #9aa9c1;
`;

const ToolBar = styled.div`
  display: flex;
  align-items: center;
  padding-left: 12px;
  border: 1px solid #cbd4e3;
  border-right: 0;
  border-radius: 3px 0 0 3px;
  background: #bcc7d9;
`;

const Grip = styled.span`
  align-self: center;
  flex: none;
  width: 4px;
  height: 28px;
  margin-left: -7px;
  margin-right: 2px;
  background: repeating-linear-gradient(#5d6d8a 0 4px, transparent 4px 8px);
`;

const ToolButton = styled.button`
  display: grid;
  place-items: center;
  flex: none;
  width: 39px;
  height: 39px;
  padding: 0;
  border: 1px solid transparent;
  background: none;
  ${(p) => p.$on && hot}
`;

const ToolRule = styled.span`
  flex: none;
  width: 1px;
  height: 33px;
  margin: 0 5px;
  background: #8793a9;
`;

const EndCap = styled.button`
  display: flex;
  align-items: flex-end;
  justify-content: center;
  align-self: stretch;
  width: 18px;
  margin-left: 4px;
  padding: 0 0 5px;
  border: 0;
  background: #d4dbe8;
`;

const End = () => (
  <EndCap type="button" aria-label="Toolbar options">
    <svg width="12" height="12" viewBox="0 0 12 12" aria-hidden="true">
      <path d="M1 2h9M1 5h9l-4.500 5z" fill="#1c2b45" stroke="#1c2b45" strokeWidth="1.500" />
    </svg>
  </EndCap>
);

const ViewPicker = styled.div`
  display: flex;
  align-items: center;
  width: 149px;
  height: 40px;
  border: 1px solid #7b8699;
  background: #bcc7d9;
`;

const ViewSelect = styled.select`
  width: 122px;
  height: 38px;
  padding: 0 0 0 4px;
  border: 0;
  border-radius: 0;
  appearance: none;
  background: #fff;
  overflow: hidden;
  text-overflow: clip;
`;

const TOOLS = [
  ["save", "saveEdit"],
  ["undo", "redo"],
  ["zin", "zout", "zfit", "hand", "spin"],
  ["net", "curveNet", "shade", "*ship", "crop"],
  ["h1", "h2", "h3", "h4", "h5", "h6", "h7", "h8", "h9", "h10", "h11", "budEye"],
  ["xNo", "xx", "*xEye", "mesh", "curve", "*surfEye"],
  ["*b1", "b2", "b3", "b4", "b5", "t1", "t2", "t3", "t4", "t5", "t6", "t7", "t8", "t9", "calc"],
  ["*cubes"],
  ["help"],
];

/* ---------- docked panels ---------- */

const Main = styled.main`
  position: relative;
  display: flex;
  flex: 1;
  background: #f0f0f0;
`;

const Dock = styled.aside`
  display: flex;
  flex-direction: column;
  flex: none;
  width: 276px;
  margin-right: 7px;
`;

const DockHead = styled.header`
  display: flex;
  align-items: center;
  gap: 6px;
  flex: none;
  height: 37px;
  padding: 2px 4px 0 7px;
  background: linear-gradient(90deg, #bfccdb, #d7e4f1);
`;

const DockTitle = styled.h2`
  flex: 1;
  margin: 0;
  font-family: "Noto Sans", sans-serif;
  font-size: 21px;
  font-weight: 400;
`;

const Tree = styled.ul`
  flex: 1 1 506px;
  margin: 0 0 7px;
  padding: 1px 0 0 5px;
  background: #fff;
  list-style: none;
  font-family: "Liberation Mono", monospace;
  font-size: 18px;
  color: #222;
`;

const TreeRow = styled.li`
  display: flex;
  align-items: center;
  height: 24px;
  white-space: pre;
`;

const Guide = styled.span`
  flex: none;
  width: 19px;
  height: 24px;
  background:
    repeating-linear-gradient(#888 0 1px, transparent 1px 3px) 6px 0 / 1px ${(p) => (p.$k === "end" ? 12 : p.$k ? 24 : 0)}px no-repeat,
    repeating-linear-gradient(90deg, #888 0 1px, transparent 1px 3px) 7px 12px / ${(p) => (p.$k === "end" || p.$k === "tee" ? 12 : 0)}px 1px no-repeat;
`;

const NodeText = styled.span`
  margin-left: ${(p) => (p.$leaf ? 0 : 6)}px;
`;

const Expander = () => (
  <svg width="19" height="14" viewBox="0 0 19 14" aria-hidden="true">
    <rect x="0.500" y="0.500" width="12" height="12" rx="1" fill="#f6f6f6" stroke="#8b8b8b" />
    <path d="M3 6.500h7" stroke="#3557a5" strokeWidth="1.400" />
    <path d="M14 6.500h5" stroke="#888" strokeDasharray="1 2" />
  </svg>
);

const Folder = () => (
  <svg width="13" height="12" viewBox="0 0 13 12" aria-hidden="true">
    <path d="M1 9V3l2-2h4l1 2h4v6z" fill="#f7f36a" stroke="#000" strokeWidth="1.200" />
  </svg>
);

const Leaf = ({ on }) => (
  <svg width="19" height="16" viewBox="0 0 19 16" aria-hidden="true">
    {on && <path d="M0 4l2 3 3-5" stroke="#000" strokeWidth="2.200" fill="none" />}
    <path d="M6.500 5h4l3 3-3 3h-4zM6.500 8h7" stroke="#777" fill="#fff" />
  </svg>
);

const TREE = [
  [[], "open", "Design"],
  [[""], "open", "Geometry"],
  [["", ""], "open", "BC"],
  [["", "", "bar", "tee"], "off", "Cy1"],
  [["", "", "bar", "tee"], "on", "Cy2"],
  [["", "", "bar", "tee"], "off", "Eb1"],
  [["", "", "bar", "tee"], "on", "Eb2"],
  [["", "", "bar", "tee"], "off", "Ea1"],
  [["", "", "bar", "end"], "on", "Ea2"],
  [["", ""], "open", "UC"],
  [["", "", "bar", "tee"], "off", "Cy1"],
  [["", "", "bar", "tee"], "on", "Cy2"],
  [["", "", "bar", "tee"], "off", "Ea1"],
  [["", "", "bar", "end"], "on", "Ea2"],
  [["", "", "end"], "on", "Section plane"],
];

const PropertyPicker = styled.div`
  display: flex;
  align-items: center;
  flex: none;
  height: 49px;
  padding: 3px 0 5px 9px;
  background: linear-gradient(90deg, #9aa9c1 5px, #cbd4e3 5px);
`;

const PropertySelect = styled.select`
  width: 100%;
  height: 41px;
  border: 1px solid #7f7f7f;
  border-right: 0;
  border-radius: 0;
  appearance: none;
  background: #f0f0f0;
`;

const PropertyField = styled.div`
  display: grid;
  flex: 1;
  align-items: center;
  justify-items: end;
  > * { grid-area: 1 / 1; }
  > span { z-index: 1; margin: 0 3px 0 0; border-width: 6px; border-bottom-width: 0; }
`;

const SortRow = styled.div`
  display: flex;
  flex: none;
  height: 44px;
`;

const SortButton = styled.button`
  display: grid;
  place-items: center;
  width: 31px;
  height: 30px;
  padding: 0;
  border: 1px solid ${(p) => (p.$on ? "#99d1ff" : "transparent")};
  background: ${(p) => (p.$on ? "#cce8ff" : "none")};
`;

const PropertySheet = styled.div`
  flex: 1 1 413px;
  border: 2px solid #9d9d9d;
  background: #fff;
`;

const PanelHead = ({ children }) => (
  <DockHead>
    <DockTitle>{children}</DockTitle>
    <PlainButton type="button" aria-label={`Pin ${children}`}><Icon name="pin" /></PlainButton>
    <PlainButton type="button" aria-label={`Close ${children}`}><Icon name="close" /></PlainButton>
  </DockHead>
);

/* ---------- viewport ---------- */

const Viewport = styled.section`
  position: relative;
  display: grid;
  flex: 1;
  grid-template: minmax(0, 1fr) 15px / 15px minmax(0, 1fr) 16px;
  margin-bottom: 1px;
  border: 2px solid #6e6e6e;
  border-right: 0;
  border-bottom: 0;
`;

const Stage = styled.svg`
  display: block;
  width: 100%;
  height: 100%;
  background: #000;
`;

const RulerV = styled.div`
  position: relative;
  background: #f0f0f0;
`;

const RulerH = styled.div`
  position: relative;
  grid-column: 1 / 3;
  border-top: 2px solid #8a8a8a;
  background: #f0f0f0;
`;

const Corner = styled.div`
  background: #000;
`;

const TickV = styled.span`
  position: absolute;
  ${(p) => (p.$flip ? "left" : "right")}: 0;
  width: ${(p) => (p.$long ? 7 : 3)}px;
  height: 1px;
  background: #000;
`;

const TickH = styled.span`
  position: absolute;
  top: 0;
  width: 1px;
  height: ${(p) => (p.$long ? 8 : 4)}px;
  background: #000;
`;

const Mark = styled.span`
  position: absolute;
  left: 0;
  font: 7px/8px "Liberation Sans", sans-serif;
  transform: translateY(-50%);
`;

const MarkH = styled.span`
  position: absolute;
  top: 5px;
  font: 7px/8px "Liberation Sans", sans-serif;
  transform: translateX(${(p) => (p.$start ? "-2px" : "-50%")});
  white-space: nowrap;
`;

const AxisName = styled.span`
  position: absolute;
  left: 2px;
  bottom: 50%;
  writing-mode: vertical-rl;
  transform: rotate(180deg);
  font: 9px/10px "Liberation Sans", sans-serif;
`;

const Thumb = styled.span`
  position: absolute;
  ${(p) => (p.$h ? "left: 35.3%; top: 5px; width: 9px; height: 7px;" : "top: 51%; left: 3px; width: 12px; height: 9px;")}
  border: 1px solid #b5b5b5;
  border-radius: 4px;
  background: #fff;
`;

const STEPS = Array.from({ length: 25 }, (_, i) => i * 15 - 180);
const vPos = (d) => `${1.3 + ((d + 180) / 360) * 97.3}%`;
const hPos = (d) => `${0.6 + ((d + 180) / 360) * 98.8}%`;

const VerticalRuler = ({ name, flip }) => (
  <RulerV>
    {STEPS.map((d) =>
      d % 90 === 0
        ? <Mark key={d} style={{ top: vPos(d) }}>{d}</Mark>
        : <TickV key={d} $flip={flip} $long={d % 45 === 0} style={{ top: vPos(d) }} />
    )}
    <AxisName>{name}</AxisName>
    <Thumb />
  </RulerV>
);

const Scene = () => (
  <Stage viewBox="300 347 2244 1076" preserveAspectRatio="xMidYMid slice" aria-label="Perspective view">
    <defs>
      <linearGradient id="column" gradientUnits="userSpaceOnUse" x1="992" x2="1759" y1="0" y2="0">
        <stop offset="0" stopColor="#0b0e02" />
        <stop offset="0.100" stopColor="#2a330a" />
        <stop offset="0.230" stopColor="#2f3a0a" />
        <stop offset="0.330" stopColor="#43510c" />
        <stop offset="0.500" stopColor="#5f7510" />
        <stop offset="0.570" stopColor="#677f12" />
        <stop offset="0.640" stopColor="#5f7510" />
        <stop offset="0.740" stopColor="#4e600e" />
        <stop offset="0.820" stopColor="#3c490b" />
        <stop offset="0.900" stopColor="#303b09" />
        <stop offset="1" stopColor="#272f08" />
      </linearGradient>
      <linearGradient id="pontoon" gradientUnits="userSpaceOnUse" x1="1167" x2="1418" y1="0" y2="0">
        <stop offset="0" stopColor="#48580c" />
        <stop offset="0.500" stopColor="#596d0f" />
        <stop offset="1" stopColor="#657e12" />
      </linearGradient>
    </defs>
    <g stroke="#4a5410" strokeWidth="2" fill="none">
      <path d="M300 554L360 551M300 673L360 684M300 933L360 929M300 1095L360 1111" />
    </g>
    <path d="M1100 663Q1350 640 1600 660T1753 676V622Q1900 627 2068 654L1418 701L1100 722Z" fill="#141503" />
    <path d="M992 347H1759L1752 677Q1600 652 1350 652Q1240 652 1100 661L992 660Z" fill="url(#column)" />
    <path d="M1070 347V500M1759 347L1752 677" stroke="#4d5f0c" strokeWidth="2" />
    <path d="M1100 722L1418 701L1412 998L1100 1001Z" fill="url(#pontoon)" />
    <path d="M1100 1001L1412 998L1411 1124L1100 1156Z" fill="#141e04" />
    <path d="M1100 722L1418 701M1753 607L2068 654" stroke="#565810" strokeWidth="2" />
    <path d="M1100 1156L1411 1124" stroke="#4d6d14" strokeWidth="2" />
    <path d="M1418 701L2068 655L2058 1058L1411 1124Z" fill="#4a4a4a" stroke="#75756a" strokeWidth="1.500" />
    <path d="M1414 697h7v7h-7zM1750 679h5v8h-5z" fill="#000" />
    <path d="M1416 700h3v2h-3zM1752 682h2v3h-2zM2066 653h3v3h-3zM2057 1056h3v3h-3zM1410 1123h3v3h-3z" fill="#e45ce4" />
    <ellipse cx="2430" cy="1332" rx="10" ry="15" fill="#548a54" />
    <path d="M2411 1328l14-9v26z" fill="#5c965c" />
    <path d="M2426 1324q-5 8 1 16l32 6v-16z" fill="#355a35" />
    <path d="M2460 1330l38-5v17l-38 4z" fill="#9a0000" />
    <ellipse cx="2498" cy="1334" rx="8" ry="15" fill="#6e0000" />
    <path d="M2500 1319q8 3 22 14-14 14-22 17 10-16 0-31z" fill="#a80000" />
    <path d="M2453 1339h7v7l-7-2z" fill="#5c965c" />
    <path d="M2451 1292h18v46q-9 2-18 0z" fill="#00009a" />
    <path d="M2460 1260l16 32q-16 3-31 0z" fill="#00008c" />
  </Stage>
);

/* ---------- rotate dialog ---------- */

const Dialog = styled.form`
  position: absolute;
  left: 356px;
  top: 87px;
  width: 811px;
  border-radius: 12px;
  background: #f0f0f0;
  box-shadow: 0 0 0 2px #3b3b3b;
  font-family: "Noto Sans", sans-serif;
  font-size: 18px;
  overflow: hidden;
`;

const DialogHead = styled.header`
  display: flex;
  align-items: center;
  justify-content: space-between;
  height: 50px;
  padding: 0 21px 0 12px;
  background: #f3f3f3;
  color: #8e8e8e;
  font-family: "Open Sans", sans-serif;
  font-size: 20px;
`;

const DialogBody = styled.div`
  padding: 17px 18px 29px;
`;

const Caption = styled.p`
  margin: 0 0 12px;
  line-height: 24px;
`;

const Row = styled.div`
  display: flex;
  gap: 17px;
  padding-left: 1px;
`;

const PushButton = styled.button`
  width: 123px;
  height: 38px;
  padding: 0;
  border: 1px solid #d2d2d2;
  border-bottom-color: #b9b9b9;
  border-radius: 5px;
  background: #fdfdfd;
`;

const Columns = styled.div`
  display: grid;
  grid-template-columns: 348px 1fr;
  gap: 22px;
  margin-top: 7px;
`;

const SurfaceList = styled.select`
  height: 589px;
  margin-top: 11px;
  padding: 0;
  border: 1px solid #82879a;
  border-radius: 0;
  background: #fff;
  overflow: hidden;
  outline: 0;
`;

const SurfaceOption = styled.option`
  display: flex;
  align-items: center;
  min-height: 17px;
  height: 17px;
  padding: 0 0 0 21px;
`;

const Settings = styled.div`
  display: flex;
  flex-direction: column;
`;

const Fields = styled.fieldset`
  display: flex;
  flex-direction: column;
  gap: ${(p) => p.$gap}px;
  margin: 0 0 10px;
  padding: ${(p) => p.$pad};
  border: 1px solid #dcdcdc;
`;

const Legend = styled.legend`
  margin-left: -23px;
  padding: 0 3px 0 2px;
  line-height: 24px;
`;

const Field = styled.div`
  display: flex;
  align-items: ${(p) => p.$align};
  justify-content: space-between;
`;

const FieldLabel = styled.label`
  line-height: 23px;
  white-space: pre-line;
`;

const TextBox = styled.input`
  width: ${(p) => p.$w}px;
  height: 35px;
  margin-top: ${(p) => p.$drop || 0}px;
  padding: 0 3px 6px;
  border: 1px solid #e8e8e8;
  border-bottom: 2px solid #868686;
  border-radius: 2px;
  background: #fff;
`;

const CheckRow = styled.div`
  display: flex;
  align-items: center;
  gap: 5px;
  height: ${(p) => p.$h}px;
`;

const Tick = styled.input`
  appearance: none;
  display: grid;
  place-items: center;
  width: 20px;
  height: 20px;
  border-radius: 4px;
  background: #0560b6;
  &::after {
    content: "";
    width: 5px;
    height: 10px;
    margin-bottom: 3px;
    border: solid #fff;
    border-width: 0 1px 1px 0;
    transform: rotate(40deg);
  }
`;

const Times = styled.label`
  margin-left: 12px;
`;

const CountBox = styled(TextBox)`
  margin-left: 6px;
`;

const Actions = styled.div`
  display: flex;
  justify-content: flex-end;
  gap: 36px;
  padding: 33px 6px 0 0;
`;

const SizeGrip = styled.svg`
  position: absolute;
  right: 0;
  bottom: 0;
`;

const SURFACES = ["Cy1", "Cy2", "Eb1", "Eb2", "Ea1", "Ea2", "Cy1", "Cy2", "Ea1", "Ea2", "Section plane"];
const ANGLES = [
  ["roll", "Longitudinal axis (roll,\n+ve stbd side down)", "0.00"],
  ["pitch", "Transverse axis (pitch,\n+ve bow down)", "0.00"],
  ["yaw", "Vertical axis (yaw,\n+ve bow to stbd)", "90.00"],
];
const CENTRE = ["Longitudinal", "Transverse", "Vertical"];

const RotateDialog = () => (
  <Dialog aria-label="Rotate">
    <DialogHead>
      Rotate
      <PlainButton type="button" aria-label="Close">
        <svg width="16" height="16" viewBox="0 0 16 16"><path d="M0 0l16 16M16 0L0 16" stroke="#8e8e8e" strokeWidth="1.500" /></svg>
      </PlainButton>
    </DialogHead>
    <DialogBody>
      <Caption>Surfaces to be rotated:</Caption>
      <Row>
        <PushButton type="button">Select All</PushButton>
        <PushButton type="button">Deselect All</PushButton>
      </Row>
      <Columns>
        <SurfaceList multiple size={11} aria-label="Surfaces to be rotated">
          {SURFACES.map((s, i) => <SurfaceOption key={i} value={i}>{s}</SurfaceOption>)}
        </SurfaceList>
        <Settings>
          <Fields $gap={29} $pad="8px 22px 13px 29px">
            <Legend>Rotation in Degrees:</Legend>
            {ANGLES.map(([id, label, value]) => (
              <Field key={id} $align="center">
                <FieldLabel htmlFor={id}>{label}</FieldLabel>
                <TextBox id={id} $w={146} $drop={6} defaultValue={value} />
              </Field>
            ))}
          </Fields>
          <Fields $gap={11} $pad="21px 22px 15px 29px">
            <Legend>Centre of Rotation:</Legend>
            {CENTRE.map((label) => (
              <Field key={label} $align="flex-start">
                <FieldLabel htmlFor={label}>{label}</FieldLabel>
                <TextBox id={label} $w={146} defaultValue="0 m" />
              </Field>
            ))}
          </Fields>
          <CheckRow $h={58}>
            <Tick type="checkbox" id="duplicate" defaultChecked />
            <label htmlFor="duplicate">Duplicate</label>
            <CountBox id="times" $w={62} defaultValue="3" />
            <Times htmlFor="times">times</Times>
          </CheckRow>
          <CheckRow $h={20}>
            <Tick type="checkbox" id="bonding" defaultChecked />
            <label htmlFor="bonding">Respect bonding</label>
          </CheckRow>
          <Actions>
            <PushButton type="button">OK</PushButton>
            <PushButton type="button">Cancel</PushButton>
          </Actions>
        </Settings>
      </Columns>
    </DialogBody>
    <SizeGrip width="22" height="22" viewBox="0 0 22 22" aria-hidden="true">
      <path d="M1 22L22 1M7 22L22 7M13 22L22 13" stroke="#9a9a9a" strokeWidth="2.500" />
    </SizeGrip>
  </Dialog>
);

/* ---------- callouts ---------- */

const Callout = styled.div`
  position: absolute;
  left: ${(p) => p.$x}px;
  top: ${(p) => p.$y}px;
  z-index: 5;
  display: flex;
`;

const Dot = styled.span`
  flex: none;
  width: 36px;
  height: 36px;
  margin: 11px 7px 0 0;
  border-radius: 50%;
  background: #fb3838;
  color: #fff;
  font-size: 21px;
  line-height: 34px;
  text-align: center;
`;

const Beak = styled.span`
  align-self: flex-start;
  margin-top: 21px;
  border: 8px solid transparent;
  border-right-color: rgba(0, 0, 0, 0.6);
  border-left: 0;
`;

const Note = styled.p`
  margin: 0;
  padding: 11px 23px 11px 10px;
  border-radius: 3px;
  background: rgba(0, 0, 0, 0.6);
  color: #fff;
  font-family: "Noto Sans CJK SC", sans-serif;
  font-size: 28px;
  line-height: 37px;
  white-space: pre;
`;

const NOTES = [
  [2, 802, 190, "使用 旋转命令"],
  [3, 972, 803, "绕Z轴旋转90度"],
  [1, 1668, 843, "选中需要复制的板"],
  [4, 989, 1023, "每旋转1次复制一个板，\n则环形阵列生成3个新板，将圆柱体分成4个仓格"],
];

/* ---------- status bar ---------- */

const Status = styled.footer`
  display: flex;
  align-items: center;
  flex: none;
  height: 27px;
  padding: 0 9px 0 3px;
  background: #f0f0f0;
  font-size: 21px;
  line-height: 27px;
`;

const StatusCell = styled.span`
  padding: 0 4px;
  border-left: 1px solid #d5d5d5;
`;

const Ready = styled.span`
  flex: 1;
`;

const FilePath = styled.span`
  padding-right: 14px;
`;

const StatusInfo = styled.div`
  display: flex;
  font-size: 22px;
`;

const More = styled.button`
  width: 30px;
  height: 39px;
  padding: 4px 0 0;
  border: 0;
  background: none;
  text-align: center;
`;

const TABS = ["Home", "Markers", "Meshes", "Control Points", "Curves", "Surfaces", "Frames", "Decks", "Stringers", "Plates", "Display", "Data", "Settings", "Support"];

export default function App() {
  return (
    <Page>
      <Global />
      <TitleBar>
        <TitleIcon><LogoMark s={22} c="#fff" /></TitleIcon>
        <TitleText>Untitled.msd - MOSES Modeler - [Perspective]</TitleText>
        <WindowButtons>
          <PlainButton type="button" aria-label="Minimize"><svg width="18" height="18" viewBox="0 0 18 18"><path d="M2 9.500h15" stroke="#8e8e8e" strokeWidth="1.500" /></svg></PlainButton>
          <PlainButton type="button" aria-label="Restore"><svg width="18" height="18" viewBox="0 0 18 18" fill="none" stroke="#8e8e8e" strokeWidth="1.500"><rect x="2" y="5" width="11" height="11" rx="2" /><path d="M5 2h8q3 0 3 3v8" /></svg></PlainButton>
          <PlainButton type="button" aria-label="Close"><svg width="18" height="18" viewBox="0 0 18 18"><path d="M1 1l16 16M17 1L1 17" stroke="#8e8e8e" strokeWidth="1.500" /></svg></PlainButton>
        </WindowButtons>
      </TitleBar>
      <PopupEdge />
      <Band />
      <AppButton type="button" aria-label="Application menu"><LogoMark s={30} c="#0d4f95" /></AppButton>
      <TabRow>
        <Tabs>{TABS.map((t) => <Tab key={t} type="button" $on={t === "Surfaces"}>{t}</Tab>)}</Tabs>
        <MdiButtons>
          <PlainButton type="button" aria-label="Minimize view"><svg width="16" height="18" viewBox="0 0 16 18"><path d="M4 15h8" stroke="#1c2b45" strokeWidth="2.500" /></svg></PlainButton>
          <PlainButton type="button" aria-label="Restore view"><svg width="16" height="18" viewBox="0 0 16 18" fill="none" stroke="#1c2b45" strokeWidth="1.500"><path d="M1 8h9v7H1zM4 8V3h10v7h-4M4 4h10M1 9h9" /></svg></PlainButton>
          <PlainButton type="button" aria-label="Close view"><svg width="16" height="18" viewBox="0 0 16 18"><path d="M2 3l12 12M14 3L2 15" stroke="#1c2b45" strokeWidth="2" /></svg></PlainButton>
        </MdiButtons>
      </TabRow>
      <Ribbon>
        <Group title="Add/Delete" w={318}>
          <Column $w={214}>
            <Command type="button"><span>&nbsp;Add<Caret /></span></Command>
            <Cmd icon="del" label="Del" />
            <Cmd icon="plus" label="Surface from Parts" off />
          </Column>
          <Rule />
          <Column $w={43} $inset={3}><Cmd icon="box" /><Cmd icon="cyl" /><Cmd icon="ball" /></Column>
          <Column><Cmd icon="bowl" /></Column>
        </Group>
        <Group title="Modify" w={265}>
          <Column $w={96}><Cmd icon="split" label="Split" off /><Cmd icon="join" label="Join" off /><Cmd icon="offset" label="Offset" /></Column>
          <Column><Cmd icon="lock" label="Locking" /><Cmd icon="appear" label="Appearance" /><Cmd icon="props" label="Properties" menu /></Column>
        </Group>
        <Group title="Manipulate" w={206}>
          <Column $w={91}><Cmd icon="drag" label="Drag" /><Cmd icon="move" label="Move" /><Cmd icon="size" label="Size" /></Column>
          <Column><Cmd icon="flip" label="Flip" /><Cmd icon="rotate" label="Rotate" on="strong" /><Cmd icon="align" label="Align" /></Column>
        </Group>
        <Group title="Generate" w={225}>
          <Column $w={99}><Cmd icon="skin" label="Skin" off /><Cmd icon="sweep" label="Sweep" off /><Cmd icon="patch" label="Patch" off /></Column>
          <Column><Cmd icon="extrude" label="Extrude" off /><Cmd icon="revolve" label="Revolve" off /></Column>
        </Group>
        <Group title="Bond Edges" w={208}>
          <BigCommand type="button" $w={192}>
            <Svg s={48} box={48}>{BIG.bond}</Svg>
            <BigLabel>Bond Edge C0 (Shift<br />to add surface)<Caret /></BigLabel>
          </BigCommand>
        </Group>
        <Group title="Trimming" w={376}>
          <Column $w={118}><Cmd icon="off" label="Off" /><Cmd icon="gray" label="Gray" on="soft" /><Cmd icon="invis" label="Invisible" /></Column>
          <Rule />
          <BigCommand type="button" $w={74}><Svg s={48} box={48}>{BIG.start}</Svg><BigLabel>Start<br />trim<Caret /></BigLabel></BigCommand>
          <BigCommand type="button" $w={80} disabled><Svg s={48} box={48}>{BIG.trim}</Svg><BigLabel>Trim</BigLabel></BigCommand>
          <Rule />
          <BigCommand type="button" $w={74}><Svg s={48} box={48}>{BIG.untrim}</Svg><BigLabel>Untrim<br /><LowCaret /></BigLabel></BigCommand>
        </Group>
        <Group title="Mask" w={127}>
          <Column><Cmd icon="mask" label="Mask" /><Cmd icon="unmask" label="Unmask" /></Column>
        </Group>
        <Group title="Fit" w={408}>
          <Column $w={218}><Cmd icon="fit" label="Fit edge" off /><Cmd icon="fit" label="Fit edge to curve" off /><Cmd icon="smooth" label="Smooth int.ctrl.pts." /></Column>
          <Rule />
          <Column>
            <Cmd icon="least" label="Surf. Least sqr" off />
            <Cmd icon="ga" label="Surf. GA" off />
            <Command type="button" disabled>
              <Svg s={32} box={32}><path d="M0 1h32v30H0z" fill="#c3c8d0" /><path d="M1 3l12 12M10 3L2 12M28 3L2 29" stroke="#5f666f" strokeWidth="2" /><path d="M18 15h12v16H18zM3 31l8-6h16" fill="#9da3ab" stroke="#5f666f" strokeWidth="2.500" /></Svg>
              Surf. Error
            </Command>
          </Column>
        </Group>
        <Group title="Display" w={262}>
          <Column $w={133}><Cmd icon="net" label="Surf.Net" /><Cmd icon="netG" label="Net Rows" off /><Cmd icon="netCols" label="Net Cols" off /></Column>
          <Rule />
          <Column><Cmd icon="mesh" label="Mesh" off /><Cmd icon="curve" label="Curve" off /><Cmd icon="surfEye" label="Surface" on="soft" /></Column>
        </Group>
      </Ribbon>
      <Gutter />
      <Strip $h={49}>
        <ToolBar role="toolbar">
          <Grip />
          {TOOLS.map((set, i) => (
            <React.Fragment key={i}>
              {i > 0 && <ToolRule />}
              {set.map((n) => (
                <ToolButton key={n} type="button" $on={n[0] === "*" ? "soft" : undefined} aria-label={n.replace("*", "")}>
                  <Icon name={n.replace("*", "")} />
                </ToolButton>
              ))}
            </React.Fragment>
          ))}
          <End />
        </ToolBar>
        <ToolBar role="toolbar">
          <Grip />
          <ViewPicker>
            <ViewSelect aria-label="View" defaultValue="hp"><option value="hp">Home Perspective</option></ViewSelect>
            <Caret />
          </ViewPicker>
          {["homeAdd", "home", "homeInfo"].map((n) => <ToolButton key={n} type="button" aria-label={n}><Icon name={n} /></ToolButton>)}
          <End />
        </ToolBar>
      </Strip>
      <Main>
        <Dock>
          <PanelHead>Assembly</PanelHead>
          <Tree>
            {TREE.map(([guides, kind, label], i) => (
              <TreeRow key={i}>
                {guides.map((g, j) => <Guide key={j} $k={g} />)}
                {kind === "open" ? <><Expander /><Folder /></> : <Leaf on={kind === "on"} />}
                <NodeText $leaf={kind !== "open"}>{label}</NodeText>
              </TreeRow>
            ))}
          </Tree>
          <PanelHead>Properties</PanelHead>
          <PropertyPicker>
            <PropertyField>
              <PropertySelect aria-label="Object" />
              <Caret $c="#808080" />
            </PropertyField>
          </PropertyPicker>
          <SortRow>
            <SortButton type="button" $on aria-label="Categorized">
              <svg width="20" height="20" viewBox="0 0 20 20" fill="none"><path d="M1 1h8v7H1zM1 11h8v7H1z" fill="#fff" stroke="#777" /><path d="M3 4.500h4M5 2.500v4M3 14.500h4M5 12.500v4" stroke="#000" /><path d="M12 3h7M12 6h7M12 9h7M12 13h7M12 16h7" stroke="#777" strokeDasharray="3 1" /></svg>
            </SortButton>
            <SortButton type="button" aria-label="Alphabetical">
              <svg width="20" height="22" viewBox="0 0 20 22" fill="none"><path d="M3 9l3-7 3 7M4 7h4M3 12h6l-6 7h6" stroke="#000" strokeWidth="1.400" /><path d="M14 2v14" stroke="#00008b" strokeWidth="2" /><path d="M11 13h6l-3 6z" fill="#00008b" /></svg>
            </SortButton>
          </SortRow>
          <PropertySheet />
        </Dock>
        <Viewport>
          <VerticalRuler name="Pitch" />
          <Scene />
          <VerticalRuler name="Roll" flip />
          <RulerH>
            {STEPS.map((d) => <TickH key={d} $long={d % 45 === 0 && d % 90 !== 0} style={{ left: hPos(d) }} />)}
            {[-180, -90, 0, 90, 180].map((d) => <MarkH key={d} $start={d === 0} style={{ left: hPos(d) }}>{d === 0 ? "0 Yaw" : d}</MarkH>)}
            <Thumb $h />
          </RulerH>
          <Corner />
        </Viewport>
        <RotateDialog />
      </Main>
      <Strip $h={50}>
        <ToolBar role="toolbar">
          <Grip />
          <More type="button">...</More>
          <ToolRule />
          <ToolButton type="button" aria-label="User"><Icon name="user" /></ToolButton>
          <End />
        </ToolBar>
      </Strip>
      <Status>
        <Ready>Ready</Ready>
        <StatusInfo>
          <FilePath>C:\Users\Ncs\Documents\Untitled.msd*</FilePath>
          <StatusCell>NUM</StatusCell>
          <StatusCell>Object Snap: OFF</StatusCell>
        </StatusInfo>
      </Status>
      {NOTES.map(([n, x, y, text]) => (
        <Callout key={n} $x={x} $y={y}>
          <Dot>{n}</Dot>
          <Beak />
          <Note>{text}</Note>
        </Callout>
      ))}
    </Page>
  );
}
